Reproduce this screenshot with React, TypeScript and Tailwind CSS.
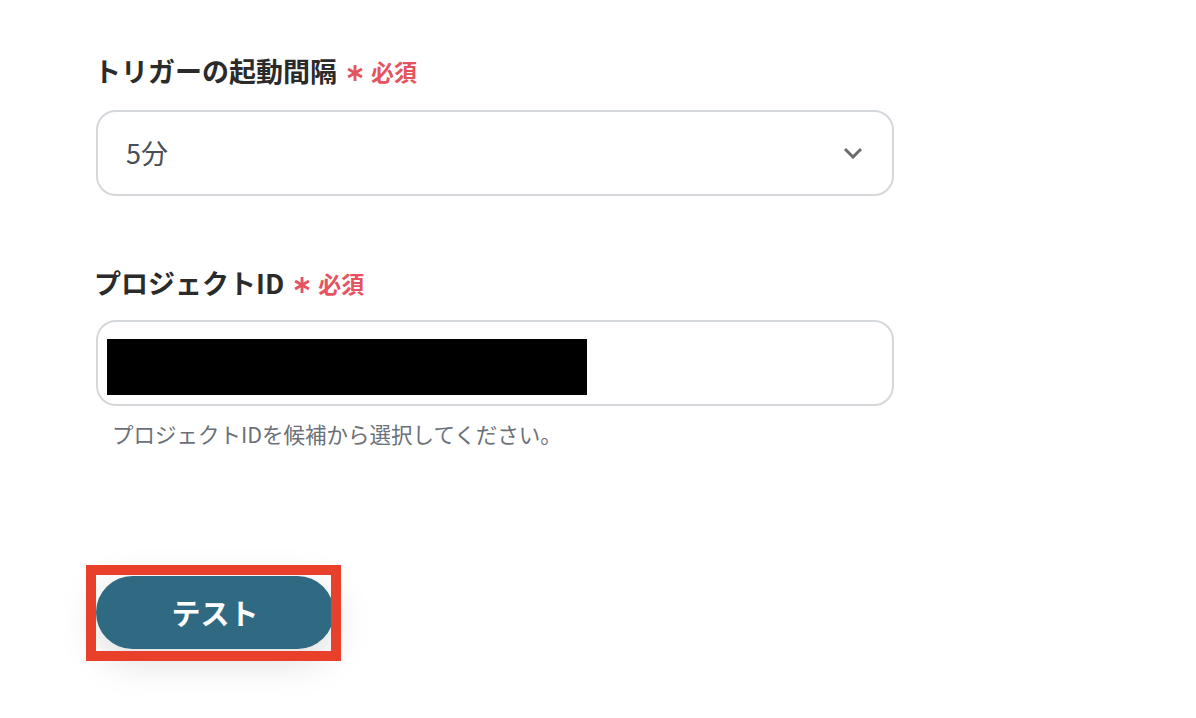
const font = { fontFamily: '"Noto Sans CJK JP", "Noto Sans", sans-serif' };

function Required() {
  return (
    <span className="ml-[9px] inline-flex items-center gap-[7px] text-[23px] font-bold text-[#e5535f]">
      <svg width="18" height="18" viewBox="0 0 18 18" className="mt-1">
        <g stroke="#e5535f" strokeWidth="2.8" strokeLinecap="butt">
          <line x1="9" y1="1" x2="9" y2="17" />
          <line x1="2.1" y1="5" x2="15.9" y2="13" />
          <line x1="2.1" y1="13" x2="15.9" y2="5" />
        </g>
      </svg>
      必須
    </span>
  );
}

function FieldLabel({ text }: { text: string }) {
  return (
    <div className="-ml-[2px] flex h-8 items-center">
      <span className="text-[27px] font-bold leading-8 text-[#2b2b2b]">{text}</span>
      <Required />
    </div>
  );
}

export default function App() {
  return (
    <div className="min-h-[718px] w-[1196px] bg-white" style={font}>
      <div className="w-[894px] pl-24 pt-[55px]">
        <FieldLabel text="トリガーの起動間隔" />

        <div className="mt-[23px] flex h-[86px] items-center justify-between rounded-[20px] border-2 border-[#d4d7dc] pl-7 pr-[29px]">
          <span className="text-[27px] text-[#4a4f57]">5分</span>
          <svg width="20" height="12" viewBox="0 0 20 12">
            <path d="M2 2 L10 10 L18 2" fill="none" stroke="#6b6b6b" strokeWidth="3" />
          </svg>
        </div>

        <div className="mt-[71px]">
          <FieldLabel text="プロジェクトID" />
        </div>

        <div className="mt-[21px] flex h-[86px] items-start rounded-[20px] border-2 border-[#d4d7dc] pl-[9px] pt-[17px]">
          <div className="h-[56px] w-[480px] bg-black" />
        </div>

        <p className="mt-[14px] pl-4 text-[21.5px] leading-7 text-[#6b7079]">
          プロジェクトIDを候補から選択してください。
        </p>

        <div className="relative mt-[128px] w-fit">
          <button className="flex h-[73px] w-[238px] items-center justify-center rounded-full bg-[#2f6a82] text-[29px] font-bold text-white shadow-[0_10px_40px_rgba(0,0,0,0.15)]">
            テスト
          </button>
          <div className="pointer-events-none absolute left-[-10px] top-[-11px] h-[96px] w-[255px] border-[10px] border-[#e8402a]" />
        </div>
      </div>
    </div>
  );
}
